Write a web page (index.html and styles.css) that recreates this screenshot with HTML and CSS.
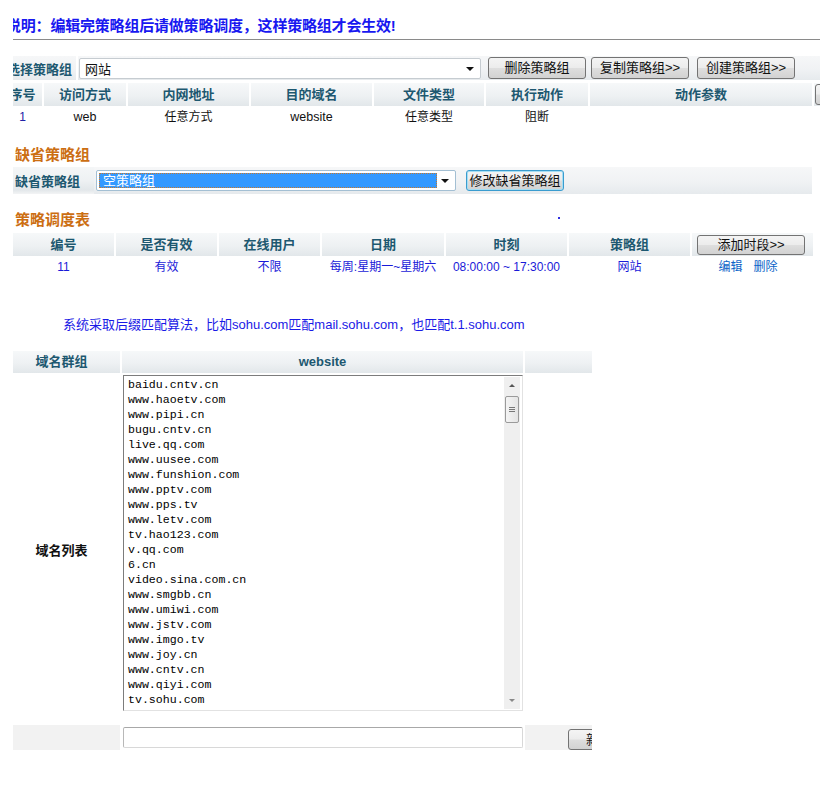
FILE: index.html
```html
<!DOCTYPE html>
<html lang="zh-CN">
<head>
<meta charset="utf-8">
<title>策略组</title>
<link rel="stylesheet" href="styles.css">
</head>
<body>
<div class="frame">
 <div class="inner">
  <h1 class="notice">说明：编辑完策略组后请做策略调度，这样策略组才会生效!</h1>
  <div class="rule"></div>

  <div class="strip strip1">
   <div class="lbl lbl1">选择策略组</div>
   <div class="sel sel1"><span class="sel-text">网站</span><i class="caret"></i></div>
   <button class="btn b1">删除策略组</button>
   <button class="btn b2">复制策略组&gt;&gt;</button>
   <button class="btn b3">创建策略组&gt;&gt;</button>
  </div>

  <div class="grid g1 head">
   <div class="hc">序号</div><div class="hc">访问方式</div><div class="hc">内网地址</div><div class="hc">目的域名</div><div class="hc">文件类型</div><div class="hc">执行动作</div><div class="hc">动作参数</div><div class="hc"><button class="btn bcut"></button></div>
  </div>
  <div class="grid g1 row">
   <div class="num">1</div><div>web</div><div>任意方式</div><div>website</div><div>任意类型</div><div>阻断</div><div></div><div></div>
  </div>

  <h2 class="sec sec1">缺省策略组</h2>
  <div class="strip strip2">
   <div class="lbl lbl2">缺省策略组</div>
   <div class="sel sel2"><span class="hl">空策略组</span><i class="caret"></i></div>
   <button class="btn bfocus">修改缺省策略组</button>
  </div>

  <h2 class="sec sec2">策略调度表<span class="dot"></span></h2>
  <div class="grid g2 head">
   <div class="hc">编号</div><div class="hc">是否有效</div><div class="hc">在线用户</div><div class="hc">日期</div><div class="hc">时刻</div><div class="hc">策略组</div><div class="hc hbtn"><button class="btn badd">添加时段&gt;&gt;</button></div>
  </div>
  <div class="grid g2 row blue">
   <div>11</div><div>有效</div><div>不限</div><div>每周:星期一~星期六</div><div class="time">08:00:00 ~ 17:30:00</div><div>网站</div><div class="ops"><span class="op">编辑</span><span class="op">删除</span></div>
  </div>

  <p class="hint">系统采取后缀匹配算法，比如sohu.com匹配mail.sohu.com，也匹配t.1.sohu.com</p>

  <div class="dom">
   <div class="grid g3 head">
    <div class="hc">域名群组</div><div class="hc">website</div><div class="hc"></div>
   </div>
   <div class="grid g3 body">
    <div class="dl">域名列表</div>
    <div class="tacell">
     <div class="ta">
      <div class="ta-lines">baidu.cntv.cn
www.haoetv.com
www.pipi.cn
bugu.cntv.cn
live.qq.com
www.uusee.com
www.funshion.com
www.pptv.com
www.pps.tv
www.letv.com
tv.hao123.com
v.qq.com
6.cn
video.sina.com.cn
www.smgbb.cn
www.umiwi.com
www.jstv.com
www.imgo.tv
www.joy.cn
www.cntv.cn
www.qiyi.com
tv.sohu.com</div>
      <div class="sb">
       <div class="sb-arrow"><i class="tri-up"></i></div>
       <div class="sb-thumb"><i></i><i></i><i></i></div>
       <div class="sb-fill"></div>
       <div class="sb-arrow"><i class="tri-down"></i></div>
      </div>
     </div>
    </div>
    <div></div>
   </div>
   <div class="grid g3 foot">
    <div class="gray"></div>
    <div class="incell"><div class="inp"></div></div>
    <div class="gray"><button class="btn bnew">新增</button></div>
   </div>
  </div>
 </div>
</div>
</body>
</html>
```

FILE: styles.css
```css
html, body {
  margin: 0;
  background: #fff;
  overflow: hidden;
}
body {
  font-family: "Liberation Sans", "Noto Sans CJK SC", sans-serif;
  color: #111;
}
.frame {
  margin-left: 13px;
  width: 807px;
  height: 788px;
  overflow: hidden;
}
.inner {
  margin-left: -15px;
  width: 900px;
}
.notice {
  margin: 16px 0 0 8px;
  font-size: 15px;
  line-height: 20px;
  font-weight: bold;
  color: #1818f0;
  white-space: nowrap;
  letter-spacing: -0.2px;
}
.rule {
  margin-top: 3px;
  width: 822px;
  border-top: 1px solid #8a8a8a;
}

/* strips */
.strip {
  display: flex;
  align-items: center;
  background: linear-gradient(#f6f7f8, #f0f2f4 55%, #e6eaed);
}
.strip1 {
  margin-top: 16px;
  height: 24px;
  width: 822px;
}
.strip2 {
  margin-top: 2px;
  height: 27px;
  width: 814px;
}
.lbl {
  align-self: stretch;
  box-sizing: border-box;
  font-size: 13px;
  font-weight: bold;
  color: #1d5870;
  white-space: nowrap;
  display: flex;
  align-items: center;
}
.lbl1 {
  width: 80px;
  padding-left: 9px;
  border-right: 2px solid #fff;
}
.lbl2 {
  width: 96px;
  padding-left: 17px;
  background: linear-gradient(#f4f6f7, #eef1f3 50%, #e2e7ea 85%, #f3f4f5);
}
.sel {
  position: relative;
  box-sizing: border-box;
  height: 21px;
  background: #fff;
  border-radius: 2px;
  font-size: 13px;
  display: flex;
  align-items: center;
}
.sel1 {
  margin-left: 1px;
  width: 402px;
  border: 1px solid #c6ccd1;
  padding-left: 5px;
}
.sel2 {
  margin-left: 2px;
  width: 360px;
  border: 1px solid #a3bfd3;
}
.hl {
  margin-left: 2px;
  width: 338px;
  height: 15px;
  box-sizing: border-box;
  background: #3399ff;
  color: #fff;
  border: 1px dotted #c6782c;
  line-height: 13px;
  padding-left: 3px;
  font-size: 13px;
}
.caret {
  position: absolute;
  right: 6px;
  top: 8px;
  width: 0;
  height: 0;
  border-left: 4px solid transparent;
  border-right: 4px solid transparent;
  border-top: 4px solid #111;
}

/* buttons */
.btn {
  box-sizing: border-box;
  height: 22px;
  padding: 0;
  border: 1px solid #737373;
  border-radius: 3px;
  background: linear-gradient(#f4f4f4, #ececec 48%, #dedede 52%, #d2d2d2);
  font-family: "Liberation Sans", "Noto Sans CJK SC", sans-serif;
  font-size: 13px;
  color: #111;
  white-space: nowrap;
  line-height: 18px;
}
.b1 { margin-left: 7px; width: 98px; }
.b2 { margin-left: 5px; width: 98px; }
.b3 { margin-left: 8px; width: 98px; }
.bfocus {
  margin-left: 10px;
  width: 98px;
  height: 21px;
  border-color: #3a9ccf;
  box-shadow: inset 0 0 0 1px #a6def3;
}
.bcut {
  width: 40px;
  height: 21px;
  margin: 1px 0 0 1px;
  display: block;
}
.badd {
  display: block;
  width: 108px;
  height: 20px;
  margin: 2px 0 0 5px;
}
.bnew {
  display: block;
  width: 60px;
  height: 21px;
  margin: 4px 0 0 43px;
  text-align: left;
  padding-left: 17px;
}

/* grids */
.grid {
  display: grid;
  column-gap: 2px;
}
.head {
  margin-top: 3px;
  height: 23px;
}
.hc {
  background: linear-gradient(#f6f8f9, #eef1f3 55%, #e2e7ea);
  font-size: 13px;
  font-weight: bold;
  color: #1d5870;
  text-align: center;
  line-height: 23px;
  white-space: nowrap;
  overflow: hidden;
}
.row {
  margin-top: 2px;
  height: 18px;
}
.row > div {
  font-size: 12px;
  line-height: 18px;
  text-align: center;
  white-space: nowrap;
}
.g1 {
  margin-left: 5px;
  grid-template-columns: 39px 82px 121px 121px 110px 102px 222px 60px;
}
.g1.row > div:nth-child(2),
.g1.row > div:nth-child(4) {
  font-size: 12.5px;
}
.num { color: #2121a6; }

.sec {
  margin: 19px 0 0 17px;
  font-size: 15px;
  line-height: 20px;
  font-weight: bold;
  color: #cc6e12;
}
.sec2 {
  position: relative;
  margin-top: 16px;
}
.dot {
  position: absolute;
  left: 543px;
  top: 7px;
  width: 2px;
  height: 2px;
  background: #3030e0;
}

.g2 {
  margin-left: 15px;
  grid-template-columns: 101px 101px 101px 122px 121px 121px 121px;
}
.hbtn { background: linear-gradient(#f6f8f9, #eef1f3 55%, #e2e7ea); }
.blue > div { color: #1a1ad8; }
.blue > .time { font-size: 12px; }
.ops { display: flex; justify-content: center; gap: 11px; padding-right: 9px; }
.blue > .ops .op { color: #0a64c8; }

.hint {
  margin: 40px 0 0 65px;
  font-size: 13px;
  line-height: 18px;
  color: #1a1ae6;
  white-space: nowrap;
}

/* domain table */
.dom {
  margin: 17px 0 0 5px;
  width: 589px;
  overflow: hidden;
}
.g3 {
  grid-template-columns: 117px 401px 100px;
}
.g3.head {
  margin-top: 0;
  height: 22px;
}
.g3.head .hc { line-height: 22px; }
.body {
  margin-top: 2px;
  height: 348px;
}
.dl {
  display: flex;
  align-items: center;
  justify-content: center;
  font-size: 13px;
  font-weight: bold;
  color: #111;
}
.ta {
  margin-left: 1px;
  width: 400px;
  height: 336px;
  box-sizing: border-box;
  border: 1px solid;
  border-color: #7c7c7c #e2e2e2 #e2e2e2 #7c7c7c;
  display: flex;
  background: #fff;
}
.ta-lines {
  flex: 1;
  padding: 1px 0 0 4px;
  font-family: "Liberation Mono", monospace;
  font-size: 11.6px;
  line-height: 15px;
  color: #000;
  white-space: pre;
  overflow: hidden;
}
.sb {
  width: 16px;
  margin: 1px 2px 1px 0;
  background: #efefef;
  display: flex;
  flex-direction: column;
}
.sb-arrow {
  height: 17px;
  display: flex;
  align-items: center;
  justify-content: center;
}
.tri-up, .tri-down {
  width: 0;
  height: 0;
  border-left: 3px solid transparent;
  border-right: 3px solid transparent;
}
.tri-up { border-bottom: 3px solid #555; }
.tri-down { border-top: 3px solid #888; }
.sb-thumb {
  margin: 2px 1px 0;
  height: 27px;
  box-sizing: border-box;
  border: 1px solid #9a9a9a;
  border-radius: 2px;
  background: linear-gradient(90deg, #f4f4f4, #e4e4e4);
  display: flex;
  flex-direction: column;
  align-items: center;
  justify-content: center;
  gap: 1px;
}
.sb-thumb i {
  display: block;
  width: 6px;
  height: 1px;
  background: #777;
}
.sb-fill { flex: 1; }

.foot {
  margin-top: 2px;
  height: 25px;
}
.gray { background: #f2f2f2; }
.inp {
  margin: 2px 0 0 1px;
  width: 400px;
  height: 21px;
  box-sizing: border-box;
  border: 1px solid #b4b4b4;
  border-color: #a8a8a8 #d8d8d8 #d8d8d8 #b8b8b8;
  border-radius: 2px;
  background: #fff;
}
```
